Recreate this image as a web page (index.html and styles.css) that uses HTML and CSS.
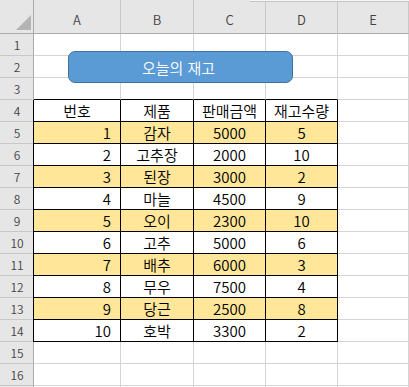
FILE: index.html
```html
<!DOCTYPE html>
<html lang="ko">
<head>
<meta charset="utf-8">
<link rel="stylesheet" href="styles.css">
</head>
<body>
<div class="sheet">
  <div class="grid">
    <div class="corner"><span class="tri"></span></div>
    <div class="ch">A</div><div class="ch">B</div><div class="ch">C</div><div class="ch">D</div><div class="ch">E</div>

    <div class="rh">1</div><div class="c"></div><div class="c"></div><div class="c"></div><div class="c"></div><div class="c"></div>
    <div class="rh">2</div><div class="c"></div><div class="c"></div><div class="c"></div><div class="c"></div><div class="c"></div>
    <div class="rh">3</div><div class="c bb"></div><div class="c bb"></div><div class="c bb"></div><div class="c bb"></div><div class="c"></div>

    <div class="rh">4</div><div class="c t first">번호</div><div class="c t">제품</div><div class="c t">판매금액</div><div class="c t last">재고수량</div><div class="c"></div>

    <div class="rh">5</div><div class="c t first y num">1</div><div class="c t y">감자</div><div class="c t y">5000</div><div class="c t last y">5</div><div class="c"></div>
    <div class="rh">6</div><div class="c t first num">2</div><div class="c t">고추장</div><div class="c t">2000</div><div class="c t last">10</div><div class="c"></div>
    <div class="rh">7</div><div class="c t first y num">3</div><div class="c t y">된장</div><div class="c t y">3000</div><div class="c t last y">2</div><div class="c"></div>
    <div class="rh">8</div><div class="c t first num">4</div><div class="c t">마늘</div><div class="c t">4500</div><div class="c t last">9</div><div class="c"></div>
    <div class="rh">9</div><div class="c t first y num">5</div><div class="c t y">오이</div><div class="c t y">2300</div><div class="c t last y">10</div><div class="c"></div>
    <div class="rh">10</div><div class="c t first num">6</div><div class="c t">고추</div><div class="c t">5000</div><div class="c t last">6</div><div class="c"></div>
    <div class="rh">11</div><div class="c t first y num">7</div><div class="c t y">배추</div><div class="c t y">6000</div><div class="c t last y">3</div><div class="c"></div>
    <div class="rh">12</div><div class="c t first num">8</div><div class="c t">무우</div><div class="c t">7500</div><div class="c t last">4</div><div class="c"></div>
    <div class="rh">13</div><div class="c t first y num">9</div><div class="c t y">당근</div><div class="c t y">2500</div><div class="c t last y">8</div><div class="c"></div>
    <div class="rh">14</div><div class="c t first num">10</div><div class="c t">호박</div><div class="c t">3300</div><div class="c t last">2</div><div class="c"></div>

    <div class="rh">15</div><div class="c"></div><div class="c"></div><div class="c"></div><div class="c"></div><div class="c"></div>
    <div class="rh">16</div><div class="c"></div><div class="c"></div><div class="c"></div><div class="c"></div><div class="c"></div>
    <div class="rh"></div><div class="c"></div><div class="c"></div><div class="c"></div><div class="c"></div><div class="c"></div>
  </div>
  <div class="topedge"></div>
  <div class="shape">오늘의 재고</div>
</div>
</body>
</html>
```

FILE: styles.css
```css
html, body {
  margin: 0;
  padding: 0;
  background: #ffffff;
}
body {
  width: 409px;
  height: 387px;
  overflow: hidden;
  font-family: "Noto Sans CJK KR", "Noto Sans", sans-serif;
}
.sheet {
  position: relative;
  width: 409px;
  height: 387px;
  overflow: hidden;
}
.grid {
  display: grid;
  grid-template-columns: 34px 87px 73px 72px 72px 71px;
  grid-template-rows: 34px repeat(16, 22px) 20px;
}
.grid > div {
  box-sizing: border-box;
  border-right: 1px solid #d4d4d4;
  border-bottom: 1px solid #d4d4d4;
  display: flex;
  align-items: center;
  justify-content: center;
  white-space: nowrap;
}
.corner {
  background: #e6e6e6;
  position: relative;
  border-right-color: #ababab !important;
  border-bottom-color: #ababab !important;
  align-items: flex-end !important;
  justify-content: flex-end !important;
  padding: 0 2px 3px 0;
}
.tri {
  width: 0;
  height: 0;
  border-left: 15px solid transparent;
  border-bottom: 15px solid #b4b4b4;
}
.grid > .ch {
  background: #e6e6e6;
  color: #444444;
  font-family: "Noto Sans CJK KR", "Noto Sans", sans-serif;
  font-size: 13px;
  font-weight: 350;
  padding-top: 6px;
  border-right-color: #c8c8c8;
  border-bottom-color: #ababab;
}
.grid > .rh {
  background: #e6e6e6;
  color: #444444;
  font-size: 12px;
  font-weight: 350;
  border-right-color: #ababab;
  border-bottom-color: #c8c8c8;
  padding-left: 1px;
}
.c {
  font-size: 15px;
  font-weight: 350;
  color: #000000;
  line-height: 21px;
}
.grid > .bb {
  border-bottom-color: #000000;
}
.grid > .t {
  border-right-color: #000000;
  border-bottom-color: #000000;
}
.grid > .first {
  border-left: 1px solid #000000;
  margin-left: -1px;
}
.grid > .num {
  justify-content: flex-end;
  padding-right: 9px;
}
.y {
  background: #ffe699;
}
.topedge {
  position: absolute;
  left: 250px;
  top: 0;
  right: 0;
  height: 1px;
  background: #f6f6f6;
  border-bottom: 1px solid #c6c6c6;
}
.shape {
  position: absolute;
  left: 68px;
  top: 51px;
  width: 225px;
  height: 32px;
  box-sizing: border-box;
  background: #5b9bd5;
  border: 1px solid #41719c;
  border-radius: 7px;
  color: #ffffff;
  font-size: 15px;
  font-weight: 350;
  display: flex;
  align-items: center;
  justify-content: center;
  padding-right: 4px;
}
```
